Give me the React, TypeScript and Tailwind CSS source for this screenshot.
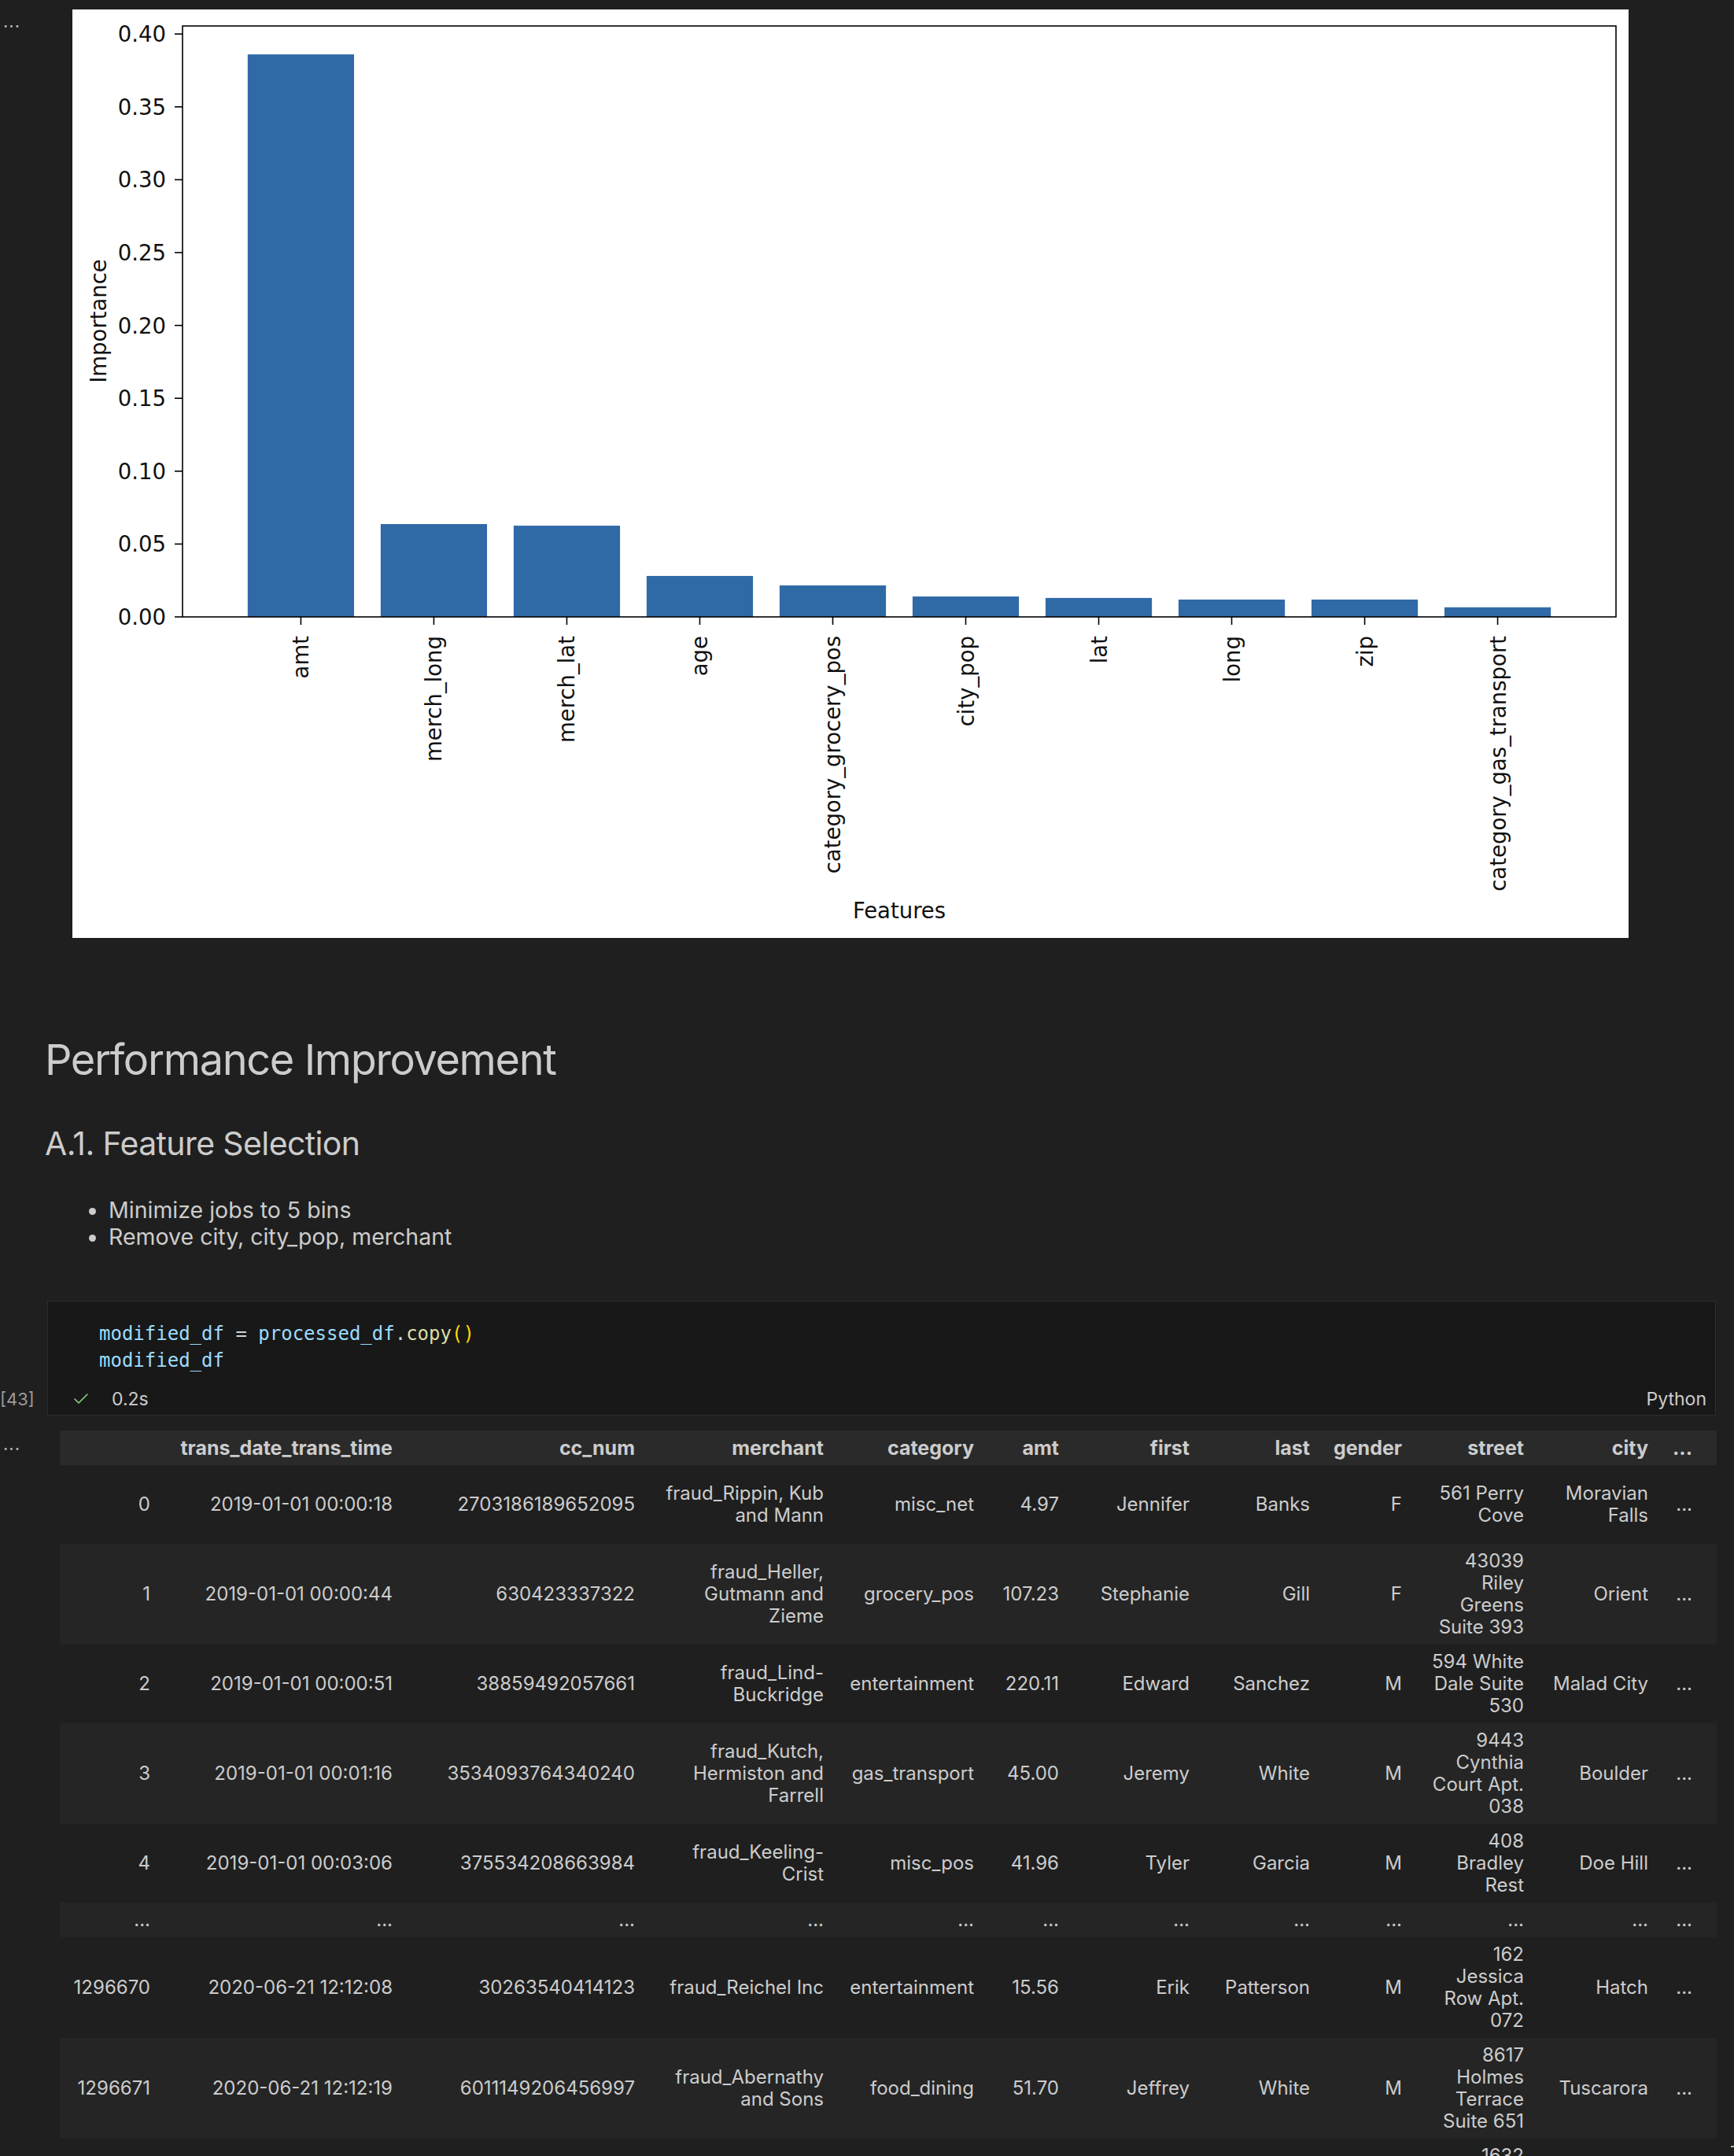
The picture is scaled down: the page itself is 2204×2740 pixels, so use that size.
import { Check } from "lucide-react";

const FEATURES = [
  { name: "amt", value: 0.386 },
  { name: "merch_long", value: 0.0637 },
  { name: "merch_lat", value: 0.0626 },
  { name: "age", value: 0.0281 },
  { name: "category_grocery_pos", value: 0.0216 },
  { name: "city_pop", value: 0.014 },
  { name: "lat", value: 0.013 },
  { name: "long", value: 0.0119 },
  { name: "zip", value: 0.0119 },
  { name: "category_gas_transport", value: 0.0066 },
];

// plot geometry, px inside the white figure
const AX_LEFT = 140;
const AX_RIGHT = 1962;
const AX_TOP = 21;
const AX_BOTTOM = 772;
const PX_PER_UNIT = 1852;
const X_UNIT = (AX_RIGHT - AX_LEFT) / 10.78;

function ImportanceChart() {
  const ticks = [0, 1, 2, 3, 4, 5, 6, 7, 8];
  const font = "'DejaVu Sans', sans-serif";
  return (
    <svg width={1978} height={1180} viewBox="0 0 1978 1180">
      {FEATURES.map((f, i) => {
        const cx = AX_LEFT + (i + 0.89) * X_UNIT;
        const h = f.value * PX_PER_UNIT;
        const w = 0.8 * X_UNIT;
        return <rect key={f.name} x={cx - w / 2} y={AX_BOTTOM - h} width={w} height={h} fill="#2f6aa7" />;
      })}
      <rect x={AX_LEFT} y={AX_TOP} width={AX_RIGHT - AX_LEFT} height={AX_BOTTOM - AX_TOP} fill="none" stroke="#000" strokeWidth={1.6} />
      {ticks.map((k) => {
        const y = AX_BOTTOM - k * 92.6;
        return (
          <g key={k}>
            <line x1={AX_LEFT - 10} x2={AX_LEFT} y1={y} y2={y} stroke="#000" strokeWidth={1.6} />
            <text x={119} y={y} textAnchor="end" dominantBaseline="central" fontSize={27.5} fontFamily={font} fill="#111">
              {(k * 0.05).toFixed(2)}
            </text>
          </g>
        );
      })}
      {FEATURES.map((f, i) => {
        const cx = AX_LEFT + (i + 0.89) * X_UNIT;
        return (
          <g key={f.name}>
            <line x1={cx} x2={cx} y1={AX_BOTTOM} y2={AX_BOTTOM + 10} stroke="#000" strokeWidth={1.6} />
            <text
              transform={`translate(${cx} ${AX_BOTTOM + 24}) rotate(-90)`}
              textAnchor="end"
              dominantBaseline="central"
              fontSize={27.5}
              fontFamily={font}
              fill="#111"
            >
              {f.name}
            </text>
          </g>
        );
      })}
      <text transform="translate(33 396) rotate(-90)" textAnchor="middle" dominantBaseline="central" fontSize={27.5} fontFamily={font} fill="#111">
        Importance
      </text>
      <text x={1051} y={1145} textAnchor="middle" dominantBaseline="central" fontSize={27.5} fontFamily={font} fill="#111">
        Features
      </text>
    </svg>
  );
}

type Cell = string | string[];

const COLS = ["", "trans_date_trans_time", "cc_num", "merchant", "category", "amt", "first", "last", "gender", "street", "city", "..."];
const COL_WIDTHS = ["w-[123px]", "w-[308px]", "w-[308px]", "w-[240px]", "w-[191px]", "w-[108px]", "w-[166px]", "w-[153px]", "w-[117px]", "w-[155px]", "w-[158px]", "w-[56px]", "w-[120px]"];

const ROWS: { h: string; cells: Cell[] }[] = [
  { h: "h-[100px]", cells: ["0", "2019-01-01 00:00:18", "2703186189652095", ["fraud_Rippin, Kub", "and Mann"], "misc_net", "4.97", "Jennifer", "Banks", "F", ["561 Perry", "Cove"], ["Moravian", "Falls"], "..."] },
  { h: "h-[128px]", cells: ["1", "2019-01-01 00:00:44", "630423337322", ["fraud_Heller,", "Gutmann and", "Zieme"], "grocery_pos", "107.23", "Stephanie", "Gill", "F", ["43039", "Riley", "Greens", "Suite 393"], "Orient", "..."] },
  { h: "h-[100px]", cells: ["2", "2019-01-01 00:00:51", "38859492057661", ["fraud_Lind-", "Buckridge"], "entertainment", "220.11", "Edward", "Sanchez", "M", ["594 White", "Dale Suite", "530"], "Malad City", "..."] },
  { h: "h-[128px]", cells: ["3", "2019-01-01 00:01:16", "3534093764340240", ["fraud_Kutch,", "Hermiston and", "Farrell"], "gas_transport", "45.00", "Jeremy", "White", "M", ["9443", "Cynthia", "Court Apt.", "038"], "Boulder", "..."] },
  { h: "h-[100px]", cells: ["4", "2019-01-01 00:03:06", "375534208663984", ["fraud_Keeling-", "Crist"], "misc_pos", "41.96", "Tyler", "Garcia", "M", ["408", "Bradley", "Rest"], "Doe Hill", "..."] },
  { h: "h-[44px]", cells: ["...", "...", "...", "...", "...", "...", "...", "...", "...", "...", "...", "..."] },
  { h: "h-[128px]", cells: ["1296670", "2020-06-21 12:12:08", "30263540414123", "fraud_Reichel Inc", "entertainment", "15.56", "Erik", "Patterson", "M", ["162", "Jessica", "Row Apt.", "072"], "Hatch", "..."] },
  { h: "h-[128px]", cells: ["1296671", "2020-06-21 12:12:19", "6011149206456997", ["fraud_Abernathy", "and Sons"], "food_dining", "51.70", "Jeffrey", "White", "M", ["8617", "Holmes", "Terrace", "Suite 651"], "Tuscarora", "..."] },
  { h: "h-[128px]", cells: ["1296672", "2020-06-21 12:12:32", "3514865930894695", ["fraud_Stiedemann", "Ltd"], "food_dining", "105.93", "Christopher", "Castaneda", "M", ["1632", "Cohen", "Drive Suite", "639"], ["High Rolls", "Mountain", "Park"], "..."] },
];

function CellText({ value }: { value: Cell }) {
  if (typeof value === "string") return <>{value}</>;
  return (
    <>
      {value.map((line, i) => (
        <div key={i}>{line}</div>
      ))}
    </>
  );
}

function DataFrameTable() {
  return (
    <table className="w-[2203px] table-fixed border-collapse text-[24px] leading-[28px] text-[#cccccc]">
      <colgroup>
        {COL_WIDTHS.map((w, i) => (
          <col key={i} className={w} />
        ))}
      </colgroup>
      <thead>
        <tr className="h-[44px] bg-[#2a2a2a]">
          {COLS.map((c, i) => (
            <th key={i} className="px-2 text-right text-[25px] font-bold whitespace-nowrap align-middle">
              {c}
            </th>
          ))}
          <th />
        </tr>
      </thead>
      <tbody>
        {ROWS.map((r, ri) => (
          <tr key={ri} className={`${r.h} ${ri % 2 === 1 ? "bg-[#252525]" : ""}`}>
            {r.cells.map((c, ci) => (
              <td key={ci} className="px-2 text-right whitespace-nowrap align-middle">
                <CellText value={c} />
              </td>
            ))}
            <td />
          </tr>
        ))}
      </tbody>
    </table>
  );
}

export default function App() {
  return (
    <div className="relative w-[2204px] h-[2740px] overflow-hidden bg-[#1f1f1f] font-['Inter',sans-serif] text-[#cccccc]">
      {/* chart output */}
      <div className="flex pt-[12px]">
        <div className="w-[92px] pl-[4px] pt-[4px] text-[22px] leading-[22px] tracking-[1px] text-[#bbbbbb]">...</div>
        <div className="w-[1978px] h-[1180px] bg-white">
          <ImportanceChart />
        </div>
      </div>

      {/* markdown */}
      <div className="pl-[57px] mt-[122px]">
        <h1 className="text-[54px] leading-[66px] tracking-[-0.025em] text-[#cccccc]">Performance Improvement</h1>
        <h2 className="mt-[48px] text-[41px] leading-[50px] tracking-[-0.015em] text-[#cccccc]">A.1. Feature Selection</h2>
        <ul className="mt-[43px] pl-[81px] list-disc text-[28.5px] leading-[34px] marker:text-[#cccccc]">
          <li>Minimize jobs to 5 bins</li>
          <li>Remove city, city_pop, merchant</li>
        </ul>
      </div>

      {/* code cell */}
      <div className="flex mt-[64px]">
        <div className="w-[60px] flex flex-col justify-end pb-[4px]">
          <div className="h-[34px] leading-[34px] text-[22px] text-[#9a9a9a]">[43]</div>
        </div>
        <div className="w-[2121px] h-[146px] border border-[#2e2e2e] bg-[#181818] flex flex-col">
          <div className="pt-[24px] pl-[65px] font-['DejaVu_Sans_Mono',monospace] text-[24px] leading-[34px] text-[#d4d4d4]">
            <div>
              <span className="text-[#9cdcfe]">modified_df</span> = <span className="text-[#9cdcfe]">processed_df</span>.
              <span className="text-[#dcdcaa]">copy</span>
              <span className="text-[#ffd700]">()</span>
            </div>
            <div className="text-[#9cdcfe]">modified_df</div>
          </div>
          <div className="mt-[15px] h-[34px] flex items-center pl-[30px] pr-[11px] text-[23px]">
            <Check size={24} strokeWidth={1.6} className="text-[#89d185]" />
            <span className="ml-[27px] text-[#cccccc]">0.2s</span>
            <span className="ml-auto text-[#cccccc]">Python</span>
          </div>
        </div>
      </div>

      {/* dataframe output */}
      <div className="flex mt-[19px]">
        <div className="w-[76px] pl-[4px] pt-[6px] text-[22px] leading-[22px] tracking-[1px] text-[#bbbbbb]">...</div>
        <div className="w-[2106px] overflow-hidden">
          <DataFrameTable />
        </div>
      </div>

      <div className="absolute right-0 top-[2727px] w-[4px] h-[2px] bg-[#89d185]" />
    </div>
  );
}
